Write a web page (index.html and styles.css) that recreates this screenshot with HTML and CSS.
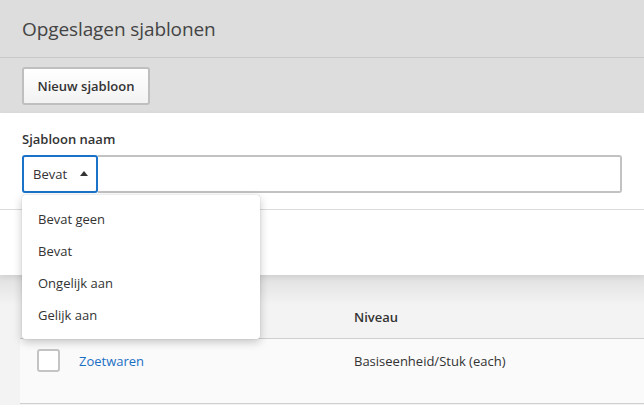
FILE: index.html
```html
<!DOCTYPE html>
<html>
<head>
<meta charset="utf-8">
<link rel="stylesheet" href="styles.css">
</head>
<body>
<div class="page">
  <header class="header"><h1 class="title">Opgeslagen sjablonen</h1></header>
  <div class="toolbar"><button class="btn">Nieuw sjabloon</button></div>
  <section class="panel">
    <div class="form">
      <label class="label">Sjabloon naam</label>
      <div class="group">
        <div class="select"><span>Bevat</span><span class="caret"></span></div>
        <div class="input"></div>
      </div>
    </div>
  </section>
  <section class="table">
    <div class="thead">
      <div class="cell c1"></div>
      <div class="cell c2"></div>
      <div class="cell c3 th">Niveau</div>
    </div>
    <div class="row">
      <div class="cell c1"><span class="check"></span></div>
      <div class="cell c2"><a class="link">Zoetwaren</a></div>
      <div class="cell c3">Basiseenheid/Stuk (each)</div>
    </div>
  </section>
  <ul class="menu">
    <li>Bevat geen</li>
    <li>Bevat</li>
    <li>Ongelijk aan</li>
    <li>Gelijk aan</li>
  </ul>
</div>
</body>
</html>
```
FILE: styles.css
```css
html, body { margin: 0; padding: 0; }
body {
  background: #dddddd;
  font-family: "Open Sans", "Noto Sans", sans-serif;
  color: #333;
  width: 644px;
  height: 405px;
  overflow: hidden;
}
.page { position: relative; height: 405px; }
.header {
  height: 57px;
  border-bottom: 1px solid #c8c8c8;
  padding: 0 22px;
  display: flex;
  align-items: center;
}
.title {
  margin: 0;
  font-weight: 400;
  font-size: 19px;
  color: #444;
  letter-spacing: -0.1px;
}
.toolbar { height: 55px; padding: 9px 22px 0; box-sizing: border-box; }
.btn {
  height: 38px;
  width: 128px;
  border: 2px solid #bfbfbf;
  border-radius: 3px;
  background: linear-gradient(#ffffff, #f2f2f2);
  font-family: inherit;
  font-size: 13px;
  font-weight: 600;
  color: #333;
  padding: 0;
}
.panel {
  background: #fff;
  height: 162px;
  box-shadow: 0 2px 6px rgba(0,0,0,0.08);
  position: relative;
}
.form {
  padding: 17px 22px 0;
  height: 97px;
  box-sizing: border-box;
  border-bottom: 1px solid #dcdcdc;
}
.label {
  display: block;
  font-size: 13px;
  font-weight: 600;
  color: #333;
  line-height: 18px;
  margin-bottom: 7px;
}
.group { display: flex; height: 38px; }
.select {
  width: 76px;
  box-sizing: border-box;
  border: 2px solid #1a73c9;
  border-radius: 3px;
  display: flex;
  align-items: center;
  padding-left: 9px;
  font-size: 13px;
  color: #333;
  gap: 13px;
  position: relative;
  z-index: 1;
}
.caret {
  width: 0; height: 0;
  border-left: 4px solid transparent;
  border-right: 4px solid transparent;
  border-bottom: 5px solid #333;
  margin-top: -1px;
}
.input {
  flex: 1;
  border: 2px solid #c2c2c2;
  border-left: none;
  border-radius: 0 3px 3px 0;
  box-sizing: border-box;
  background: #fff;
}
.table {
  background: linear-gradient(#e0e0e0, #f3f3f3 30px, #f3f3f3);
  height: 130px;
}
.thead, .row {
  display: flex;
  margin-left: 20px;
}
.thead { height: 63px; border-bottom: 1px solid #cfcfcf; align-items: flex-end; }
.row { height: 64px; background: #fafafa; border-bottom: 1px solid #cfcfcf; align-items: flex-start; }
.cell { font-size: 13px; color: #333; line-height: 18px; }
.c1 { width: 59px; padding-left: 17px; box-sizing: border-box; }
.c2 { width: 275px; }
.c3 { flex: 1; }
.thead .cell { padding-bottom: 12px; }
.th { font-weight: 600; }
.row .cell { padding-top: 13px; }
.row .c1 { padding-top: 10px; }
.check {
  width: 23px; height: 23px;
  box-sizing: border-box;
  border: 2px solid #c4c4c4;
  border-radius: 3px;
  background: #fff;
  display: block;
}
.link { color: #1a6fc4; text-decoration: none; }
.menu {
  position: absolute;
  left: 22px;
  top: 195px;
  width: 238px;
  height: 144px;
  margin: 0;
  padding: 8px 0 0;
  box-sizing: border-box;
  list-style: none;
  background: #fff;
  border-radius: 3px;
  box-shadow: 0 3px 10px rgba(0,0,0,0.22), 0 0 1px rgba(0,0,0,0.3);
  z-index: 5;
}
.menu li {
  height: 32px;
  line-height: 32px;
  padding-left: 16px;
  font-size: 13px;
  color: #333;
}
```
